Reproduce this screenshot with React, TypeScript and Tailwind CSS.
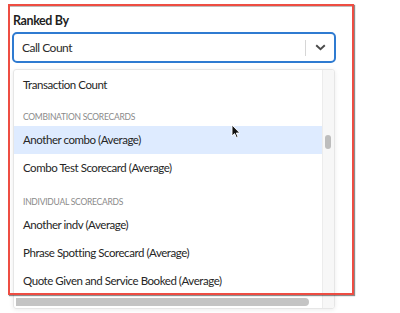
import React from "react";

const font = { fontFamily: "Lato, 'Open Sans', sans-serif" };

function Row({ label, active }: { label: string; active?: boolean }) {
  return (
    <div
      className={`h-[28px] flex items-center pl-[9px] text-[11.5px] tracking-[-0.45px] text-[#262626] whitespace-nowrap ${
        active ? "bg-[#deebff]" : ""
      }`}
    >
      {label}
    </div>
  );
}

function Heading({ label, h }: { label: string; h: string }) {
  return (
    <div
      className={`${h} flex items-end pb-[3px] pl-[9px] text-[8.5px] leading-[11px] tracking-[-0.25px] text-[#8a8a8a] uppercase whitespace-nowrap`}
    >
      {label}
    </div>
  );
}

export default function App() {
  return (
    <div className="relative w-[400px] h-[313px] bg-white overflow-hidden" style={font}>
      <div className="pl-[12px] pt-[13px] flex flex-col">
        <div className="pl-[1px] text-[12.5px] leading-[16px] tracking-[-0.4px] font-bold text-[#1f1f1f]">Ranked By</div>
        <div className="mt-[3px] w-[324px] h-[31px] rounded-[5px] border-2 border-[#2f7bd1] flex items-center">
          <div className="flex-1 pl-[8px] text-[12px] tracking-[-0.5px] text-[#2b2b2b]">Call Count</div>
          <div className="w-px h-[16px] bg-[#d6d6d6]" />
          <div className="w-[28px] flex items-center justify-center">
            <svg width="11" height="7" viewBox="0 0 11 7">
              <path d="M1.2 1.2 L5.5 5.3 L9.8 1.2" fill="none" stroke="#4a4a4a" strokeWidth="1.9" />
            </svg>
          </div>
        </div>
        <div className="mt-[6px] ml-[1px] w-[322px] h-[240px] border border-[#e6e6e6] rounded-[3px] shadow-[0_1px_4px_rgba(0,0,0,0.08)] flex overflow-hidden">
          <div className="flex-1 flex flex-col relative pt-[1px]">
            <Row label="Transaction Count" />
            <Heading label="Combination Scorecards" h="h-[27px]" />
            <Row label="Another combo (Average)" active />
            <Row label="Combo Test Scorecard (Average)" />
            <Heading label="Individual Scorecards" h="h-[29px]" />
            <Row label="Another indv (Average)" />
            <Row label="Phrase Spotting Scorecard (Average)" />
            <Row label="Quote Given and Service Booked (Average)" />
            <div className="absolute left-[2px] bottom-[2px] w-[293px] h-[8px] rounded-r-[4px] bg-[#c4c4c4]" />
          </div>
          <div className="w-[12px] bg-[#f7f7f7] border-l border-[#ececec] relative">
            <div className="absolute left-[2px] top-[65px] w-[6px] h-[14px] rounded-[3px] bg-[#bdbdbd]" />
          </div>
        </div>
      </div>

      <div className="absolute left-[8px] top-[4px] w-[346px] h-[291px] border-[2.5px] border-[#ee4d43] shadow-[1px_1px_1px_rgba(0,0,0,0.45),inset_0_1px_0_rgba(0,0,0,0.25)] pointer-events-none" />

      <svg className="absolute left-[231px] top-[124px]" width="10" height="15" viewBox="0 0 10 15">
        <path d="M1 1 L1 12 L3.6 9.6 L5.4 13.6 L7 12.9 L5.3 9 L8.8 9 Z" fill="#111" stroke="#fff" strokeWidth="0.9" />
      </svg>
    </div>
  );
}
